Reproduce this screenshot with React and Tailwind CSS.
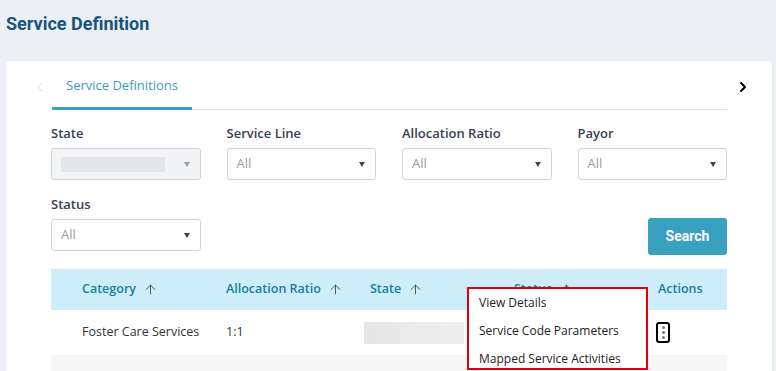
import React from 'react';
import { ArrowUp, ChevronLeft, ChevronRight } from 'lucide-react';

const Caret = ({ light }) => (
  <svg width="6" height="5" viewBox="0 0 6 5" className="shrink-0">
    <path d="M0 0 H6 L3 5 Z" fill={light ? '#9aa0a6' : '#444'} />
  </svg>
);

const Select = ({ value = 'All', disabled }) => (
  <div
    className={`h-[32px] flex items-center justify-between rounded-[3px] border border-[#cfd3d8] pl-[9px] pr-[10px] ${
      disabled ? 'bg-[#f3f4f6]' : 'bg-white'
    }`}
  >
    {disabled ? (
      <div className="h-[15px] w-[104px] bg-[#e4e5e7]" />
    ) : (
      <span className="text-[13px] text-[#9b9b9b]">{value}</span>
    )}
    <Caret light={disabled} />
  </div>
);

const Field = ({ label, children }) => (
  <div className="flex flex-col">
    <label className="text-[13px] leading-[18px] font-semibold text-[#374151] mb-[6px]">{label}</label>
    {children}
  </div>
);

const columns = ['Category', 'Allocation Ratio', 'State', 'Status'];

export default function App() {
  return (
    <div className="h-[371px] overflow-hidden bg-[#eceff4] font-['Open_Sans',sans-serif]">
      <h1 className="pl-[6px] pt-[10px] h-[61px] text-[18px] font-bold text-[#17557f] font-['Roboto',sans-serif]">
        Service Definition
      </h1>

      <div className="ml-[6px] mr-[4px] bg-white rounded-[4px] shadow-[0_0_2px_rgba(0,0,0,0.06)] pb-10">
        {/* tabs */}
        <div className="flex h-[49px]">
          <div className="w-[46px] flex items-center justify-end pr-[4px] pt-[3px]">
            <ChevronLeft size={16} strokeWidth={1.5} className="text-[#dde0e4]" />
          </div>
          <div className="flex-1 flex items-end border-b border-[#dfe2e7]">
            <button className="h-full w-[140px] pl-[14px] text-left text-[13px] text-[#3a9cc0] border-b-[3px] border-[#3aa0bf] -mb-px pt-[3px]">
              Service Definitions
            </button>
          </div>
          <div className="w-[45px] flex items-center pl-[8px] pt-[3px]">
            <ChevronRight size={16} strokeWidth={3} className="text-black" />
          </div>
        </div>

        <div className="px-[45px]">
          {/* filters */}
          <div className="grid grid-cols-4 gap-x-[26px] gap-y-[15px] mt-[14px]">
            <Field label="State">
              <Select disabled />
            </Field>
            <Field label="Service Line">
              <Select />
            </Field>
            <Field label="Allocation Ratio">
              <Select />
            </Field>
            <Field label="Payor">
              <Select />
            </Field>
            <Field label="Status">
              <Select />
            </Field>
            <div />
            <div />
            <div className="flex items-end justify-end">
              <button className="h-[37px] w-[79px] -mb-[4px] rounded-[3px] bg-[#3aa0bf] text-white text-[14px] font-bold font-['Roboto',sans-serif]">
                Search
              </button>
            </div>
          </div>

          {/* table */}
          <div className="relative mt-[18px]">
            <div className="grid grid-cols-[144px_144px_144px_144px_1fr] h-[41px] items-center bg-[#cdeef8] text-[12.5px] font-semibold text-[#17809c] whitespace-nowrap">
              {columns.map((c) => (
                <div key={c} className="pl-[31px] flex items-center gap-[7px]">
                  {c}
                  <ArrowUp size={15} strokeWidth={1.6} className="shrink-0 text-[#555]" />
                </div>
              ))}
              <div className="pl-[31px]">Actions</div>
            </div>
            <div className="grid grid-cols-[144px_144px_144px_144px_1fr] h-[45px] items-center text-[12.5px] text-[#333] bg-white whitespace-nowrap">
              <div className="pl-[31px]">Foster Care Services</div>
              <div className="pl-[31px]">1:1</div>
              <div className="pl-[25px]">
                <div className="h-[22px] w-[100px] bg-gradient-to-r from-[#e6e6e6] to-[#eeeeee]" />
              </div>
              <div />
              <div className="pl-[29px]">
                <div className="h-[21px] w-[14px] rounded-[3px] border-2 border-black flex flex-col items-center justify-center gap-[2px]">
                  <span className="block h-[3px] w-[3px] rounded-full bg-[#777]" />
                  <span className="block h-[3px] w-[3px] rounded-full bg-[#777]" />
                  <span className="block h-[3px] w-[3px] rounded-full bg-[#777]" />
                </div>
              </div>
            </div>
            <div className="h-[45px] bg-[#f7f7f7]" />

            {/* actions menu */}
            <div className="absolute left-[416px] top-[18px] w-[181px] h-[83px] overflow-hidden bg-white border-2 border-[#e0000b] text-[12px] text-[#222]">
              <div className="h-[28px] flex items-center pl-[10px]">View Details</div>
              <div className="h-[28px] flex items-center pl-[10px]">Service Code Parameters</div>
              <div className="h-[28px] flex items-center pl-[10px]">Mapped Service Activities</div>
            </div>
          </div>
        </div>
      </div>
    </div>
  );
}
